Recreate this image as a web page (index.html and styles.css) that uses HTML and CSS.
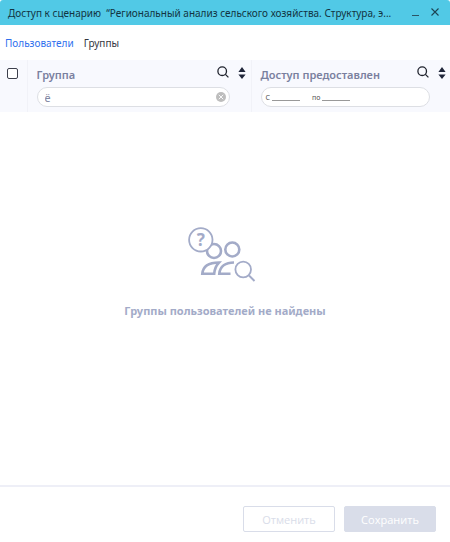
FILE: index.html
```html
<!DOCTYPE html>
<html lang="ru">
<head>
    <meta charset="UTF-8">
    <meta name="viewport" content="width=device-width, initial-scale=1.0">
    <title>Доступ к сценарию</title>
    <link rel="stylesheet" href="styles.css">
</head>

<body>
    <div class="dialog">
        <header class="title-bar">
            <h1 class="title">Доступ к сценарию &nbsp;“Региональный анализ сельского хозяйства. Структура, э...</h1>
            <button class="window-button" aria-label="Свернуть">
                <svg width="10" height="10" viewBox="0 0 10 10"><path d="M2 7.5h7" stroke="#2b5566"/></svg>
            </button>
            <button class="window-button" aria-label="Закрыть">
                <svg width="10" height="10" viewBox="0 0 10 10"><path d="M1.5.5l7 7M8.5.5l-7 7" stroke="#1d4454" stroke-width="1.1"/></svg>
            </button>
        </header>

        <nav class="tabs">
            <a href="#users" class="tab active">Пользователи</a>
            <a href="#groups" class="tab">Группы</a>
        </nav>

        <table class="groups">
            <thead>
                <tr>
                    <th class="check-cell"><input type="checkbox" class="checkbox" aria-label="Выбрать все"></th>
                    <th class="group-cell">
                        <div class="column-head">
                            <label class="column-title" for="group-filter">Группа</label>
                            <button class="icon-button" aria-label="Поиск">
                                <svg width="12" height="12" viewBox="0 0 12 12" fill="none" stroke="#20232d" stroke-width="1.3"><circle cx="5.2" cy="5.2" r="4.3"/><path d="M8.4 8.4l3 3"/></svg>
                            </button>
                            <button class="icon-button sort" aria-label="Сортировка">
                                <svg width="8" height="12" viewBox="0 0 8 12" fill="#20263a"><path d="M4 0l3.6 4.9H.4zM4 12L.4 7.5h7.2z"/></svg>
                            </button>
                        </div>
                        <div class="filter">
                            <input type="text" id="group-filter" class="filter-input" value="ё">
                            <button class="icon-button" aria-label="Очистить">
                                <svg width="10" height="10" viewBox="0 0 10 10"><circle cx="5" cy="5" r="5" fill="#bdbdbd"/><path d="M2.8 2.8l4.4 4.4M7.2 2.8L2.8 7.2" stroke="#fff" stroke-width=".9"/></svg>
                            </button>
                        </div>
                    </th>
                    <th class="access-cell">
                        <div class="column-head">
                            <span class="column-title">Доступ предоставлен</span>
                            <button class="icon-button" aria-label="Поиск">
                                <svg width="12" height="12" viewBox="0 0 12 12" fill="none" stroke="#20232d" stroke-width="1.3"><circle cx="5.2" cy="5.2" r="4.3"/><path d="M8.4 8.4l3 3"/></svg>
                            </button>
                            <button class="icon-button sort" aria-label="Сортировка">
                                <svg width="8" height="12" viewBox="0 0 8 12" fill="#20263a"><path d="M4 0l3.6 4.9H.4zM4 12L.4 7.5h7.2z"/></svg>
                            </button>
                        </div>
                        <div class="filter dates">
                            <label class="date-label" for="date-from">С</label>
                            <input type="text" id="date-from" class="date-input">
                            <label class="date-label" for="date-to">по</label>
                            <input type="text" id="date-to" class="date-input">
                        </div>
                    </th>
                </tr>
            </thead>
        </table>

        <main class="empty">
            <svg class="empty-icon" width="74" height="55" viewBox="0 0 74 55" fill="none" stroke="#a3abc8">
                <circle cx="26" cy="24" r="7" stroke-width="2.6"/>
                <circle cx="44.3" cy="22.5" r="7" stroke-width="2.6"/>
                <circle cx="12.8" cy="12.8" r="11.7" fill="#fff" stroke-width="1.8"/>
                <text x="12.8" y="19" class="question">?</text>
                <path d="M31 35.5C21 35.5 15 39 14.3 46.7H26.2C26.6 42 28.4 38.2 31 35.5Z" stroke-width="2.6"/>
                <path d="M46 35.5C37.5 35.5 32 39.5 31.3 46.7H42.5" stroke-width="2.6"/>
                <circle cx="55.2" cy="42.5" r="7.8" fill="#fff" stroke-width="1.8"/>
                <path d="M61 48.5l5.5 5.5" stroke-width="2"/>
            </svg>
            <p class="empty-text">Группы пользователей не найдены</p>
        </main>

        <footer class="footer">
            <button class="button cancel">Отменить</button>
            <button class="button save">Сохранить</button>
        </footer>
    </div>
</body>
</html>
```
FILE: styles.css
```css
*{
    box-sizing: border-box;
}
body{
    margin: 0;
    background-color: #fff;
    font-family: "Noto Sans", sans-serif;
    font-size: 11px;
}
button{
    font-family: inherit;
    padding: 0;
    border: none;
    background-color: transparent;
    cursor: pointer;
}
input{
    font-family: inherit;
    margin: 0;
    outline: none;
}
svg{
    display: block;
}
.dialog{
    display: flex;
    flex-direction: column;
    min-height: 100vh;
}

/* title bar */
.title-bar{
    display: flex;
    align-items: center;
    gap: 10px;
    height: 25px;
    padding: 0 10px 0 8px;
    border-radius: 3px 3px 0 0;
    background-color: #51c9e6;
}
.title{
    flex: 1;
    margin: 0;
    font-size: 10px;
    font-weight: normal;
    white-space: nowrap;
    color: #123442;
}

/* tabs */
.tabs{
    display: flex;
    align-items: center;
    gap: 10px;
    height: 35px;
    padding: 0 5px;
}
.tab{
    font-size: 10px;
    color: #34363f;
    text-decoration: none;
}
.tab.active{
    color: #2f70ee;
}

/* table head */
.groups{
    width: 100%;
    table-layout: fixed;
    border-collapse: collapse;
}
th{
    height: 52px;
    padding: 6px 5px 5px 9px;
    background-color: #f8f9fe;
    border-right: 1px solid #f1f2f8;
    text-align: left;
    vertical-align: top;
}
.check-cell{
    width: 27px;
    padding: 8px 0 0 7px;
}
.group-cell{
    width: 224px;
}
.access-cell{
    padding-right: 4px;
    border-right: none;
}
.column-head{
    display: flex;
    gap: 9px;
    height: 18px;
    margin-bottom: 3px;
}
.column-title{
    flex: 1;
    font-size: 11px;
    line-height: 18px;
    font-weight: 600;
    color: #7a809e;
}
.icon-button{
    align-self: flex-start;
}
.sort{
    padding-top: 1px;
}
.checkbox{
    display: block;
    appearance: none;
    width: 11px;
    height: 11px;
    border: 1px solid #3c3f4c;
    border-radius: 2px;
    background-color: #fff;
}
.filter{
    display: flex;
    align-items: center;
    height: 20px;
    margin-right: 16px;
    padding: 0 3px 0 7px;
    border: 1px solid #dddfe4;
    border-radius: 10px;
    background-color: #fff;
}
.filter .icon-button{
    align-self: center;
}
.filter-input{
    flex: 1;
    min-width: 0;
    padding: 0;
    border: none;
    background-color: transparent;
    font-size: 11px;
    color: #8389a3;
}
.dates{
    padding: 0 4px;
}
.date-label{
    margin-right: 2px;
    font-size: 7px;
    font-weight: normal;
    color: #555;
}
.date-input{
    width: 28px;
    height: 8px;
    margin-right: 12px;
    padding: 0;
    border: none;
    border-bottom: 1px solid #999;
    font-size: 7px;
}

/* empty list */
.empty{
    flex: 1;
    display: flex;
    flex-direction: column;
    align-items: center;
    padding-top: 115px;
}
.question{
    font-size: 17px;
    font-weight: 700;
    text-anchor: middle;
    fill: #a3abc8;
    stroke: none;
}
.empty-text{
    margin: 20px 0;
    font-size: 11px;
    line-height: 18px;
    font-weight: 700;
    color: #a3abc8;
}

/* footer */
.footer{
    display: flex;
    justify-content: flex-end;
    gap: 9px;
    padding: 19px 14px 10px;
    border-top: 2px solid #eeeff7;
}
.button{
    width: 92px;
    height: 26px;
    border: 1px solid #d9dde9;
    border-radius: 2px;
    font-family: "Open Sans", sans-serif;
    font-size: 11px;
}
.cancel{
    background-color: #fff;
    color: #d9dde9;
}
.save{
    background-color: #d9dde9;
    color: #fff;
}
```
